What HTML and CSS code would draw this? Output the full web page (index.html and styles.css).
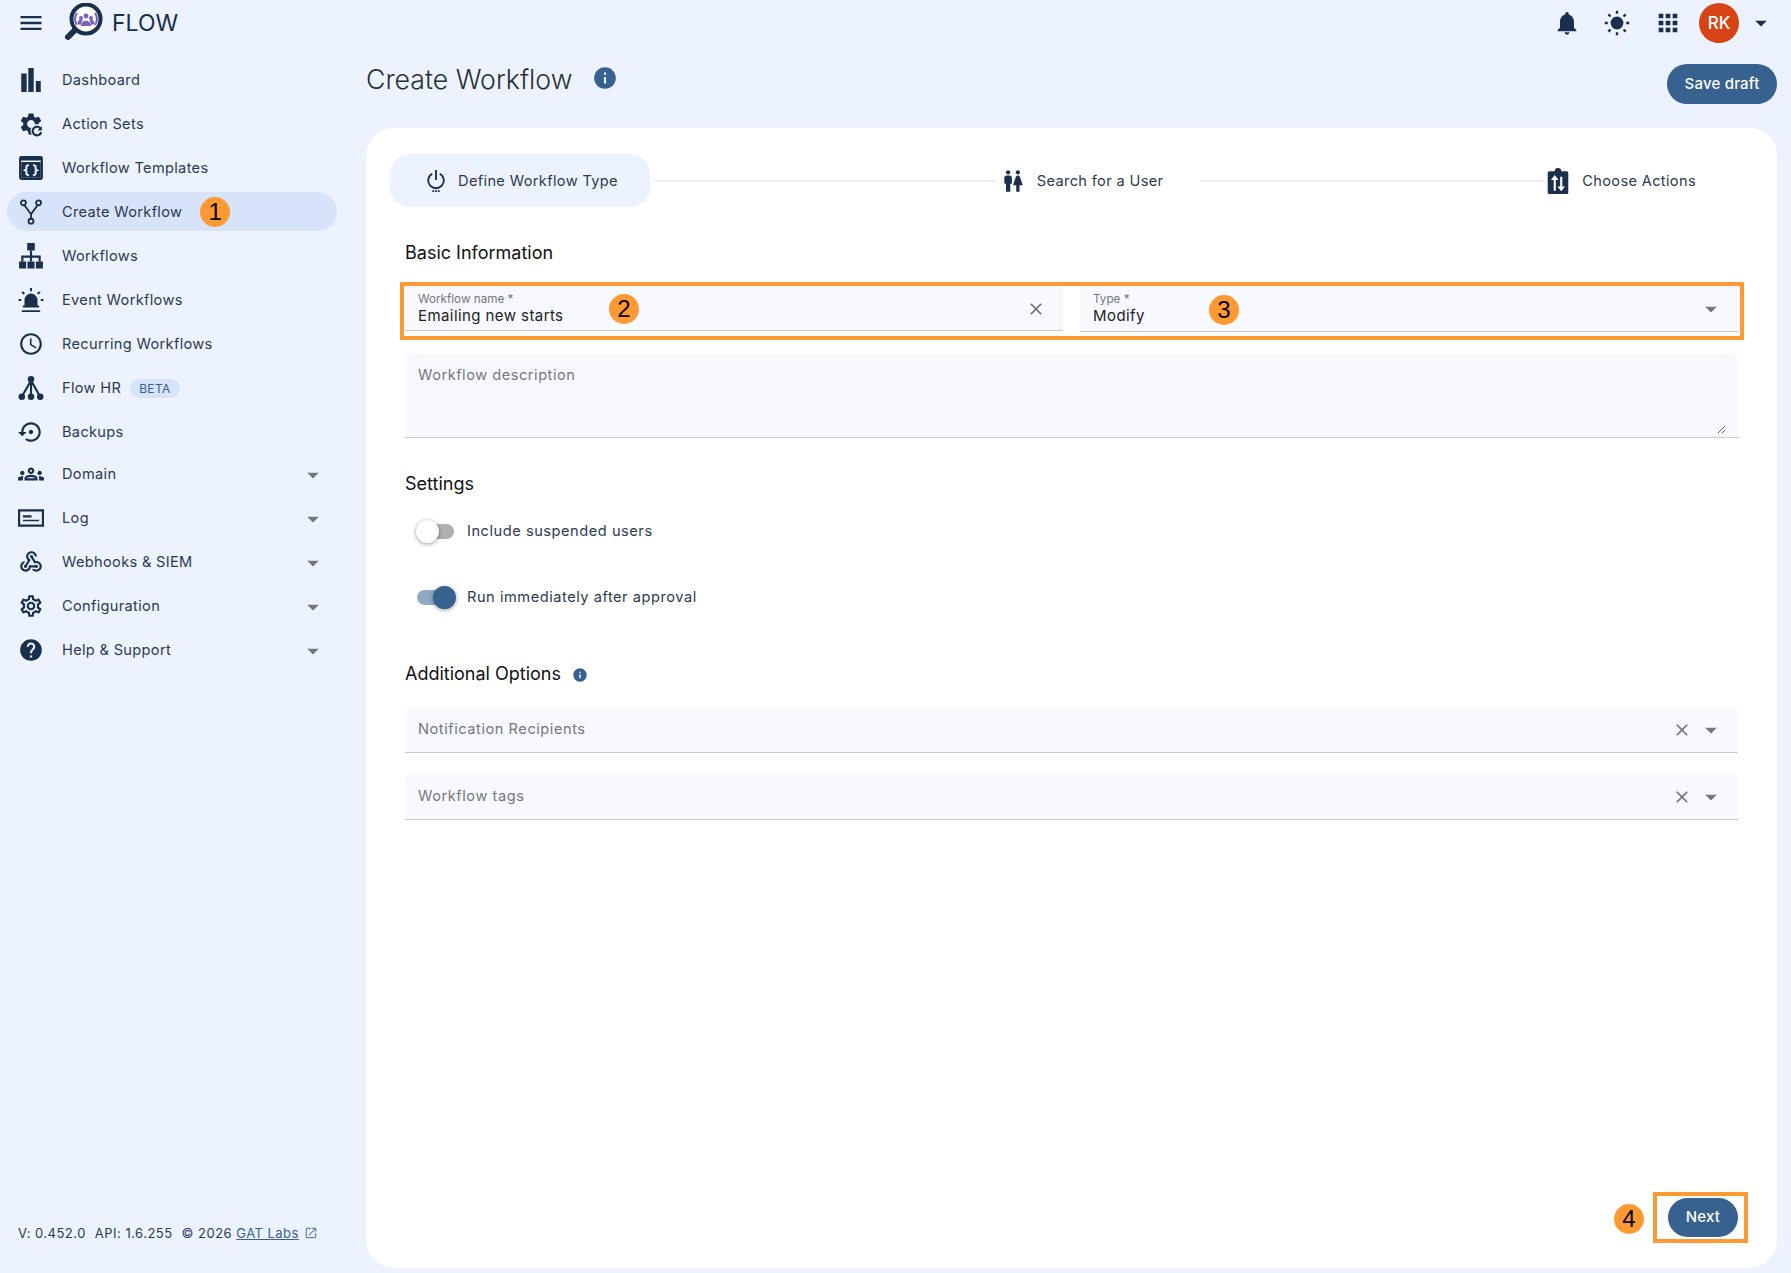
FILE: index.html
```html
<!DOCTYPE html>
<html lang="en">

<head>
  <meta charset="UTF-8">
  <title>Create Workflow</title>
  <link rel="stylesheet" href="styles.css">
</head>

<body>
  <header class="topbar">
    <svg class="menu-icon" viewBox="0 0 24 24"><path d="M3 18h18v-2H3v2zm0-5h18v-2H3v2zm0-7v2h18V6H3z"/></svg>
    <svg class="logo" viewBox="0 0 40 40">
      <path d="M14 25 5 34" stroke="#1a2f4b" stroke-width="6" stroke-linecap="round" fill="none"/>
      <circle cx="23" cy="16" r="14.5" fill="#fff" stroke="#1a2f4b" stroke-width="4"/>
      <path d="M14 10a11 11 0 0 0 0 12M32 10a11 11 0 0 1 0 12" stroke="#7562b8" stroke-width="2" fill="none"/>
      <circle cx="23" cy="13" r="2.4" fill="#7562b8"/><circle cx="18" cy="15" r="2" fill="#7562b8"/><circle cx="28" cy="15" r="2" fill="#7562b8"/>
      <path d="M18 23c0-7 10-7 10 0zM14.500 21c0-5 4-5 5-4l-2 5zM31.500 21c0-5-4-5-5-4l2 5z" fill="#7562b8"/>
    </svg>
    <span class="brand">FLOW</span>
    <div class="top-actions">
      <svg class="top-icon" viewBox="0 0 24 24"><path d="M12 22c1.100 0 2-.9 2-2h-4c0 1.100.89 2 2 2zm6-6v-5c0-3.070-1.640-5.640-4.500-6.320V4c0-.83-.67-1.500-1.500-1.500s-1.500.67-1.500 1.500v.68C7.630 5.360 6 7.920 6 11v5l-2 2v1h16v-1l-2-2z"/></svg>
      <svg class="top-icon" viewBox="0 0 24 24"><circle cx="12" cy="12" r="5.500"/><path d="M12 1.500v2.600M12 19.900v2.600M1.500 12h2.600M19.900 12h2.600M4.600 4.600l1.800 1.800M17.600 17.600l1.800 1.800M4.600 19.400l1.800-1.800M17.600 6.400l1.800-1.800" stroke="#1a2f4b" stroke-width="2" fill="none"/></svg>
      <svg class="top-icon" viewBox="0 0 24 24"><path d="M4 8h4V4H4v4zm6 12h4v-4h-4v4zm-6 0h4v-4H4v4zm0-6h4v-4H4v4zm6 0h4v-4h-4v4zm6-10v4h4V4h-4zm-6 4h4V4h-4v4zm6 6h4v-4h-4v4zm0 6h4v-4h-4v4z"/></svg>
      <div class="avatar">RK</div>
      <svg class="top-caret" viewBox="0 0 24 24"><path d="M7 10l5 5 5-5z"/></svg>
    </div>
  </header>

  <aside class="sidebar">
    <nav class="nav">
      <a class="nav-item">
        <svg class="nav-icon" viewBox="0 0 24 24"><path d="M3 7h5v17H3zM9.500 2h5v22h-5zM16.500 14H21v10h-4.500z" transform="translate(0 -1)"/></svg>
        <span>Dashboard</span>
      </a>
      <a class="nav-item">
        <svg class="nav-icon" viewBox="0 0 24 24"><path d="M19.140 12.940c.04-.3.06-.61.06-.94 0-.32-.02-.64-.07-.94l2.030-1.580c.18-.14.23-.41.12-.61l-1.920-3.320c-.12-.22-.37-.29-.59-.22l-2.390.96c-.5-.38-1.030-.7-1.620-.94l-.36-2.540c-.04-.24-.24-.41-.48-.41h-3.840c-.24 0-.43.17-.47.41l-.36 2.540c-.59.24-1.130.57-1.620.94l-2.390-.96c-.22-.08-.47 0-.59.22L2.740 8.870c-.12.21-.08.47.12.61l2.030 1.580c-.05.3-.09.63-.09.94s.02.64.07.94l-2.030 1.580c-.18.14-.23.41-.12.61l1.920 3.320c.12.22.37.29.59.22l2.390-.96c.5.38 1.030.7 1.620.94l.36 2.540c.05.24.24.41.48.41h3.840c.24 0 .44-.17.47-.41l.36-2.540c.59-.24 1.130-.56 1.620-.94l2.390.96c.22.08.47 0 .59-.22l1.920-3.320c.12-.22.07-.47-.12-.61l-2.010-1.580zM12 15.600c-1.980 0-3.600-1.620-3.600-3.600s1.620-3.600 3.600-3.600 3.600 1.620 3.600 3.600-1.620 3.600-3.600 3.600z"/><circle cx="17.500" cy="18" r="6" fill="#ecf3ff"/><path d="M21 16.500a4 4 0 1 0 .4 3" stroke="#1a2f4b" stroke-width="2" fill="none"/><path d="M22 14v4h-4z"/></svg>
        <span>Action Sets</span>
      </a>
      <a class="nav-item">
        <svg class="nav-icon" viewBox="0 0 24 24"><path fill-rule="evenodd" d="M3 1h18a2 2 0 0 1 2 2v18a2 2 0 0 1-2 2H3a2 2 0 0 1-2-2V3a2 2 0 0 1 2-2zm0 4v16h18V5z"/><rect x="3" y="6.500" width="18" height="14.500" fill="#1a2f4b"/><path d="M10 9 7.800 10.300V13L6.200 14l1.600 1V17.700L10 19M14 9l2.200 1.300V13l1.600 1-1.600 1v2.700L14 19" stroke="#ecf3ff" stroke-width="1.800" fill="none"/></svg>
        <span>Workflow Templates</span>
      </a>
      <a class="nav-item active">
        <svg class="nav-icon" viewBox="0 0 24 24" fill="none" stroke="#1a2f4b" stroke-width="1.700"><circle cx="5" cy="3.500" r="2.300" fill="none"/><circle cx="19" cy="3.500" r="2.300" fill="none"/><circle cx="12" cy="20.500" r="2.300" fill="none"/><path d="M6 5.700 12 14l6-8.300M12 14v4.200" fill="none"/></svg>
        <span>Create Workflow</span>
        <span class="badge badge-nav">1</span>
      </a>
      <a class="nav-item">
        <svg class="nav-icon" viewBox="0 0 24 24"><path d="M8.500 0h7v7h-7zM1 17h6.500v6.500H1zM8.750 17h6.500v6.500h-6.500zM16.500 17H23v6.500h-6.500z"/><path d="M12 7v10M4 17v-4.500h16V17" stroke="#1a2f4b" stroke-width="2" fill="none"/></svg>
        <span>Workflows</span>
      </a>
      <a class="nav-item">
        <svg class="nav-icon" viewBox="0 0 24 24"><path d="M6 17v-5a6 6 0 0 1 12 0v5h1.500v2h-15v-2zM3.500 21.500h17v1.500h-17z"/><path d="M12 1v3M3.800 4.500l2 2M20.200 4.500l-2 2M.5 12h2.500M21 12h2.500" stroke="#1a2f4b" stroke-width="1.800" fill="none"/></svg>
        <span>Event Workflows</span>
      </a>
      <a class="nav-item">
        <svg class="nav-icon" viewBox="0 0 24 24"><path d="M11.990 2C6.470 2 2 6.480 2 12s4.470 10 9.990 10C17.520 22 22 17.520 22 12S17.520 2 11.990 2zM12 20c-4.420 0-8-3.580-8-8s3.580-8 8-8 8 3.580 8 8-3.580 8-8 8zm.5-13H11v6l5.250 3.150.75-1.230-4.500-2.670z"/></svg>
        <span>Recurring Workflows</span>
      </a>
      <a class="nav-item">
        <svg class="nav-icon" viewBox="0 0 24 24"><path d="M12 5 3.500 20M12 5v15M12 5l8.500 15" stroke="#1a2f4b" stroke-width="2" fill="none"/><circle cx="12" cy="4" r="3"/><circle cx="12" cy="20" r="3"/><circle cx="3.500" cy="20" r="3"/><circle cx="20.500" cy="20" r="3"/></svg>
        <span>Flow HR</span>
        <span class="beta">BETA</span>
      </a>
      <a class="nav-item">
        <svg class="nav-icon" viewBox="0 0 24 24"><path d="M14 12c0-1.100-.9-2-2-2s-2 .9-2 2 .9 2 2 2 2-.9 2-2zm-2-9c-4.970 0-9 4.030-9 9H0l4 4 4-4H5c0-3.870 3.130-7 7-7s7 3.130 7 7-3.130 7-7 7c-1.510 0-2.910-.49-4.060-1.300l-1.420 1.440C8.040 20.300 9.940 21 12 21c4.970 0 9-4.030 9-9s-4.030-9-9-9z"/></svg>
        <span>Backups</span>
      </a>
      <a class="nav-item first-group">
        <svg class="nav-icon" viewBox="0 0 24 24"><path d="M4 13c1.100 0 2-.9 2-2s-.9-2-2-2-2 .9-2 2 .9 2 2 2zm1.130 1.100c-.37-.06-.74-.1-1.130-.1-.99 0-1.930.21-2.780.58C.48 14.900 0 15.620 0 16.430V18h4.500v-1.610c0-.83.23-1.610.63-2.290zM20 13c1.100 0 2-.9 2-2s-.9-2-2-2-2 .9-2 2 .9 2 2 2zm4 3.430c0-.81-.48-1.530-1.220-1.850-.85-.37-1.790-.58-2.780-.58-.39 0-.76.04-1.130.1.4.68.63 1.460.63 2.290V18H24v-1.570zm-7.760-2.780c-1.170-.52-2.610-.9-4.240-.9-1.630 0-3.070.39-4.240.9C6.680 14.130 6 15.210 6 16.390V18h12v-1.610c0-1.180-.68-2.260-1.760-2.740zM8.070 16c.09-.23.13-.39.91-.69.97-.38 1.990-.56 3.020-.56s2.050.18 3.020.56c.77.3.81.46.91.69H8.070zM12 8c.55 0 1 .45 1 1s-.45 1-1 1-1-.45-1-1 .45-1 1-1m0-2c-1.660 0-3 1.340-3 3s1.340 3 3 3 3-1.340 3-3-1.340-3-3-3z"/></svg>
        <span>Domain</span>
        <svg class="nav-caret" viewBox="0 0 24 24"><path d="M7 10l5 5 5-5z"/></svg>
      </a>
      <a class="nav-item">
        <svg class="nav-icon" viewBox="0 0 24 24"><path fill-rule="evenodd" d="M0 4h24v16H0zm2 2v12h20V6z"/><path d="M4.500 9.500h8v2h-8zM4.500 13.500h15v1.500h-15z"/></svg>
        <span>Log</span>
        <svg class="nav-caret" viewBox="0 0 24 24"><path d="M7 10l5 5 5-5z"/></svg>
      </a>
      <a class="nav-item">
        <svg class="nav-icon" viewBox="0 0 24 24"><path d="M10 15h5.880c.27-.31.67-.5 1.120-.5.83 0 1.500.67 1.500 1.500s-.67 1.500-1.500 1.500c-.44 0-.84-.19-1.120-.5H11.900c-.46 2.280-2.480 4-4.900 4-2.760 0-5-2.240-5-5 0-2.420 1.720-4.440 4-4.900v2.070c-1.160.41-2 1.530-2 2.830 0 1.650 1.350 3 3 3s3-1.350 3-3v-1zm2.500-11c1.650 0 3 1.350 3 3h2c0-2.760-2.240-5-5-5s-5 2.240-5 5c0 1.430.6 2.710 1.550 3.620l-2.350 3.900C6.020 14.660 5.500 15.270 5.500 16c0 .83.67 1.500 1.500 1.500s1.500-.67 1.500-1.500c0-.16-.02-.31-.07-.45l3.380-5.630C10.490 9.610 9.500 8.420 9.500 7c0-1.650 1.350-3 3-3zm4.500 9c-.64 0-1.230.2-1.720.54l-3.050-5.070C11.530 8.350 11 7.740 11 7c0-.83.67-1.500 1.500-1.500S14 6.170 14 7c0 .15-.02.29-.06.43l2.190 3.650c.28-.05.57-.08.87-.08 2.760 0 5 2.240 5 5s-2.240 5-5 5c-1.850 0-3.470-1.010-4.330-2.500h2.670c.48.32 1.050.5 1.660.5 1.650 0 3-1.350 3-3s-1.350-3-3-3z"/></svg>
        <span>Webhooks &amp; SIEM</span>
        <svg class="nav-caret" viewBox="0 0 24 24"><path d="M7 10l5 5 5-5z"/></svg>
      </a>
      <a class="nav-item">
        <svg class="nav-icon" viewBox="0 0 24 24"><path d="M19.430 12.980c.04-.32.07-.64.07-.98 0-.34-.03-.66-.07-.98l2.110-1.650c.19-.15.24-.42.12-.64l-2-3.460c-.09-.16-.26-.25-.44-.25-.06 0-.12.01-.17.03l-2.490 1c-.52-.4-1.080-.73-1.690-.98l-.38-2.650C14.460 2.180 14.250 2 14 2h-4c-.25 0-.46.18-.49.42l-.38 2.650c-.61.25-1.170.59-1.690.98l-2.490-1c-.06-.02-.12-.03-.18-.03-.17 0-.34.09-.43.25l-2 3.460c-.13.22-.07.49.12.64l2.110 1.650c-.04.32-.07.65-.07.98 0 .33.03.66.07.98l-2.110 1.650c-.19.15-.24.42-.12.64l2 3.460c.09.16.26.25.44.25.06 0 .12-.01.17-.03l2.490-1c.52.4 1.080.73 1.690.98l.38 2.650c.03.24.24.42.49.42h4c.25 0 .46-.18.49-.42l.38-2.650c.61-.25 1.170-.59 1.690-.98l2.490 1c.06.02.12.03.18.03.17 0 .34-.09.43-.25l2-3.460c.12-.22.07-.49-.12-.64l-2.110-1.650zm-1.980-1.710c.04.31.05.52.05.73 0 .21-.02.43-.05.73l-.14 1.130.89.7 1.080.84-.7 1.210-1.270-.51-1.040-.42-.9.68c-.43.32-.84.56-1.250.73l-1.060.43-.16 1.130-.2 1.350h-1.400l-.19-1.350-.16-1.130-1.060-.43c-.43-.18-.83-.41-1.230-.71l-.91-.7-1.060.43-1.270.51-.7-1.210 1.080-.84.89-.7-.14-1.130c-.03-.31-.05-.54-.05-.74s.02-.43.05-.73l.14-1.130-.89-.7-1.080-.84.7-1.210 1.270.51 1.040.42.9-.68c.43-.32.84-.56 1.250-.73l1.060-.43.16-1.130.2-1.350h1.390l.19 1.350.16 1.130 1.060.43c.43.18.83.41 1.230.71l.91.7 1.060-.43 1.270-.51.7 1.210-1.070.85-.89.7.14 1.130zM12 8c-2.210 0-4 1.790-4 4s1.790 4 4 4 4-1.790 4-4-1.790-4-4-4zm0 6c-1.100 0-2-.9-2-2s.9-2 2-2 2 .9 2 2-.9 2-2 2z"/></svg>
        <span>Configuration</span>
        <svg class="nav-caret" viewBox="0 0 24 24"><path d="M7 10l5 5 5-5z"/></svg>
      </a>
      <a class="nav-item">
        <svg class="nav-icon" viewBox="0 0 24 24"><path d="M12 2C6.480 2 2 6.480 2 12s4.480 10 10 10 10-4.480 10-10S17.520 2 12 2zm1 17h-2v-2h2v2zm2.070-7.750l-.9.92C13.450 12.900 13 13.500 13 15h-2v-.5c0-1.100.45-2.100 1.170-2.830l1.240-1.260c.37-.36.59-.86.59-1.410 0-1.100-.9-2-2-2s-2 .9-2 2H8c0-2.210 1.790-4 4-4s4 1.790 4 4c0 .88-.36 1.680-.93 2.250z"/></svg>
        <span>Help &amp; Support</span>
        <svg class="nav-caret" viewBox="0 0 24 24"><path d="M7 10l5 5 5-5z"/></svg>
      </a>
    </nav>
    <div class="version">
      <span>V: 0.452.0</span>
      <span>API: 1.6.255</span>
      <span>© 2026 <a class="gat-link">GAT Labs</a></span>
      <svg class="ext-icon" viewBox="0 0 24 24"><path d="M19 19H5V5h7V3H5c-1.110 0-2 .9-2 2v14c0 1.100.89 2 2 2h14c1.100 0 2-.9 2-2v-7h-2v7zM14 3v2h3.590l-9.830 9.830 1.410 1.410L19 6.410V10h2V3h-7z"/></svg>
    </div>
  </aside>

  <main class="main">
    <div class="page-head">
      <h1 class="page-title">Create Workflow</h1>
      <svg class="info-big" viewBox="0 0 24 24"><path d="M12 2C6.480 2 2 6.480 2 12s4.480 10 10 10 10-4.480 10-10S17.520 2 12 2zm1 15h-2v-6h2v6zm0-8h-2V7h2v2z"/></svg>
      <button class="btn save-btn">Save draft</button>
    </div>

    <section class="panel">
      <div class="stepper">
        <div class="step step-active">
          <svg class="step-icon" viewBox="0 0 24 24"><path d="M11 0h2v11h-2zM16.800 3.200l-1.200 1.600A7.500 7.500 0 1 1 8.400 4.800L7.200 3.200a9.500 9.500 0 1 0 9.600 0zM8 22h2v2H8zM11 22h2v2h-2zM14 22h2v2h-2z"/></svg>
          <span>Define Workflow Type</span>
        </div>
        <div class="step-line"></div>
        <div class="step step-mid">
          <svg class="step-icon" viewBox="0 0 24 24"><path d="M5.500 22v-7.500H4V9c0-1.100.9-2 2-2h3c1.100 0 2 .9 2 2v5.500H9.500V22h-4zM18 22v-6h3l-2.540-7.630C18.180 7.550 17.420 7 16.560 7h-.12c-.86 0-1.630.55-1.900 1.370L12 16h3v6h3zM7.500 6c1.110 0 2-.89 2-2s-.89-2-2-2-2 .89-2 2 .89 2 2 2zm9 0c1.110 0 2-.89 2-2s-.89-2-2-2-2 .89-2 2 .89 2 2 2z"/></svg>
          <span>Search for a User</span>
        </div>
        <div class="step-line"></div>
        <div class="step step-last">
          <svg class="step-icon" viewBox="0 0 24 24"><path d="M4 3h5a3 3 0 0 1 6 0h5a1.500 1.500 0 0 1 1.500 1.500v18A1.500 1.500 0 0 1 20 24H4a1.500 1.500 0 0 1-1.500-1.500v-18A1.500 1.500 0 0 1 4 3z"/><path d="M9 21V10M15 8v11" stroke="#fff" stroke-width="2" fill="none"/><path d="M5.500 11 9 6.500l3.500 4.500zM11.500 17 15 21.500l3.500-4.500z" fill="#fff"/></svg>
          <span>Choose Actions</span>
        </div>
      </div>

      <h2 class="section-title section-basic">Basic Information</h2>
      <div class="mark-row">
        <div class="field field-name">
          <span class="field-label">Workflow name *</span>
          <span class="field-value">Emailing new starts</span>
          <span class="badge badge-name">2</span>
          <svg class="clear-icon" viewBox="0 0 24 24"><path d="M19 6.410 17.590 5 12 10.590 6.410 5 5 6.410 10.590 12 5 17.590 6.410 19 12 13.410 17.590 19 19 17.590 13.410 12z"/></svg>
        </div>
        <div class="field field-type">
          <span class="field-label">Type *</span>
          <span class="field-value">Modify</span>
          <span class="badge badge-type">3</span>
          <svg class="drop-icon" viewBox="0 0 24 24"><path d="M7 10l5 5 5-5z"/></svg>
        </div>
      </div>
      <div class="description-box">
        <textarea class="description" placeholder="Workflow description"></textarea>
      </div>

      <h2 class="section-title section-settings">Settings</h2>
      <div class="toggle-row toggle-row-first">
        <span class="toggle"><span class="thumb"></span></span>
        <span>Include suspended users</span>
      </div>
      <div class="toggle-row">
        <span class="toggle toggle-on"><span class="thumb"></span></span>
        <span>Run immediately after approval</span>
      </div>

      <h2 class="section-title section-options">
        Additional Options
        <svg class="info-small" viewBox="0 0 24 24"><path d="M12 2C6.480 2 2 6.480 2 12s4.480 10 10 10 10-4.480 10-10S17.520 2 12 2zm1 15h-2v-6h2v6zm0-8h-2V7h2v2z"/></svg>
      </h2>
      <div class="select-field">
        <span>Notification Recipients</span>
        <svg class="clear-icon" viewBox="0 0 24 24"><path d="M19 6.410 17.590 5 12 10.590 6.410 5 5 6.410 10.590 12 5 17.590 6.410 19 12 13.410 17.590 19 19 17.590 13.410 12z"/></svg>
        <svg class="drop-icon" viewBox="0 0 24 24"><path d="M7 10l5 5 5-5z"/></svg>
      </div>
      <div class="select-field">
        <span>Workflow tags</span>
        <svg class="clear-icon" viewBox="0 0 24 24"><path d="M19 6.410 17.590 5 12 10.590 6.410 5 5 6.410 10.590 12 5 17.590 6.410 19 12 13.410 17.590 19 19 17.590 13.410 12z"/></svg>
        <svg class="drop-icon" viewBox="0 0 24 24"><path d="M7 10l5 5 5-5z"/></svg>
      </div>

      <div class="panel-foot">
        <span class="badge badge-next">4</span>
        <div class="mark-next">
          <button class="btn next-btn">Next</button>
        </div>
      </div>
    </section>
  </main>
</body>

</html>
```

FILE: styles.css
```css
* {
  margin: 0;
  padding: 0;
  box-sizing: border-box;
  font-family: Inter, "Noto Sans", sans-serif;
}

html,
body {
  height: 100%;
  overflow: hidden;
}

body {
  display: grid;
  grid-template-columns: 366px 1fr;
  grid-template-rows: 46px 1fr;
  background: #ecf3ff;
  color: #2c3a50;
}

svg {
  fill: #1a2f4b;
  flex-shrink: 0;
}

/* top bar */
.topbar {
  grid-column: 1 / 3;
  display: flex;
  align-items: center;
  padding: 0 16px 0 17px;
}

.menu-icon {
  width: 28px;
  height: 28px;
}

.logo {
  width: 40px;
  height: 40px;
  margin-left: 18px;
}

.brand {
  margin-left: 9px;
  font-size: 23px;
  color: #1a2f4b;
}

.top-actions {
  margin-left: auto;
  display: flex;
  align-items: center;
}

.top-icon {
  width: 28px;
  height: 28px;
  margin-right: 22.5px;
}

.avatar {
  width: 40px;
  height: 40px;
  margin-left: -5px;
  border-radius: 50%;
  background: #d84315;
  color: white;
  font-size: 17px;
  font-weight: 500;
  display: flex;
  align-items: center;
  justify-content: center;
}

.top-caret {
  width: 28px;
  height: 28px;
  margin-left: 8px;
}

/* sidebar */
.sidebar {
  display: flex;
  flex-direction: column;
  padding: 12px 0 32px 7px;
}

.nav {
  width: 330px;
}

.nav-item {
  height: 44px;
  display: flex;
  align-items: center;
  font-size: 14.6px;
  letter-spacing: 0.32px;
  border-radius: 20px;
  padding-left: 11px;
}

.nav-item.active {
  height: 39px;
  margin: 2px 0 3px;
  background: #d7e3f8;
}

.first-group {
  margin-top: -2px;
}

.nav-icon {
  width: 26px;
  height: 26px;
  margin-right: 18px;
}

.nav-caret {
  width: 28px;
  height: 28px;
  margin: 2px 10px 0 auto;
  fill: #747678;
}

.beta {
  margin-left: 9px;
  padding: 0 9px;
  height: 19px;
  line-height: 19px;
  border-radius: 10px;
  background: #d7e3f8;
  color: #37618e;
  font-size: 12px;
}

.badge {
  width: 30px;
  height: 30px;
  border-radius: 50%;
  background: #ff9933;
  color: black;
  font-family: "Liberation Sans", sans-serif;
  font-size: 24px;
  display: flex;
  align-items: center;
  justify-content: center;
  flex-shrink: 0;
}

.badge-nav {
  margin-left: 18px;
}

.badge-next {
  margin-top: 3px;
}

.version {
  margin-top: auto;
  padding-left: 11px;
  display: flex;
  align-items: center;
  gap: 9px;
  font-size: 13px;
  letter-spacing: 0.48px;
}

.gat-link {
  color: #37618e;
  text-decoration: underline;
}

.ext-icon {
  width: 14px;
  height: 14px;
  margin-left: -4px;
  fill: #5f83ab;
}

/* main */
.main {
  display: flex;
  flex-direction: column;
  padding: 0 14px 5px 0;
  min-height: 0;
}

.page-head {
  height: 82px;
  flex-shrink: 0;
  display: flex;
  align-items: flex-start;
}

.page-title {
  margin-top: 16px;
  font-size: 26.7px;
  font-weight: 300;
  line-height: 34px;
  color: #2a2f36;
}

.info-big {
  width: 26px;
  height: 26px;
  margin: 19px 0 0 20px;
  fill: #37618e;
}

.btn {
  border: none;
  border-radius: 20px;
  background: #37618e;
  color: white;
  font-size: 15px;
  font-weight: 500;
  letter-spacing: 0.2px;
  padding-bottom: 2px;
}

.save-btn {
  margin: 18px 0 0 auto;
  width: 110px;
  height: 40px;
}

.panel {
  flex: 1;
  background: white;
  border-radius: 28px;
  padding: 26px 39px 25px;
  display: flex;
  flex-direction: column;
  min-height: 0;
}

/* stepper */
.stepper {
  display: flex;
  align-items: center;
  margin-left: -15px;
  height: 53px;
  flex-shrink: 0;
  font-size: 14.6px;
  letter-spacing: 0.35px;
}

.step {
  display: flex;
  align-items: center;
  white-space: nowrap;
  height: 100%;
}

.step-active {
  width: 260px;
  margin-right: 5px;
  padding-left: 35px;
  background: #ecf3ff;
  border-radius: 20px;
}

.step-mid {
  padding: 0 38px 0 3px;
}

.step-last {
  padding: 0 42px 0 2px;
}

.step-icon {
  width: 26px;
  height: 26px;
  margin-right: 11px;
}

.step-active .step-icon {
  width: 22px;
  height: 24px;
}

.step-line {
  flex: 1;
  height: 2px;
  background: #eeeeee;
}

/* form */
.section-title {
  font-size: 18px;
  font-weight: 400;
  line-height: 24px;
  color: #111;
  flex-shrink: 0;
}

.section-basic {
  margin-top: 34px;
}

.section-settings {
  margin-top: 34px;
}

.section-options {
  margin-top: 46px;
  display: flex;
  align-items: center;
}

.info-small {
  width: 16px;
  height: 16px;
  margin: 2px 0 0 11px;
  fill: #37618e;
}

.mark-row {
  margin: 17px -6px 0 -5px;
  height: 58px;
  flex-shrink: 0;
  border: 4px solid #ff9933;
  display: flex;
  justify-content: space-between;
  padding: 0 2px 0 1px;
}

.field {
  position: relative;
  width: 658px;
  height: 45px;
  padding-left: 13px;
  background: #f7f9ff;
  border-bottom: 1px solid #c9c9cc;
  border-radius: 4px 4px 0 0;
  display: flex;
  flex-direction: column;
}

.field-type {
  height: 46px;
}

.field-label {
  margin-top: 6px;
  font-size: 11.7px;
  line-height: 14px;
  color: #74777c;
}

.field-value {
  font-size: 15px;
  line-height: 19px;
  letter-spacing: 0.42px;
  color: #222;
}

.badge-name,
.badge-type {
  position: absolute;
  top: 8px;
}

.badge-name {
  left: 204px;
}

.badge-type {
  top: 9px;
  left: 129px;
}

.clear-icon {
  width: 20px;
  height: 20px;
  fill: #747678;
}

.drop-icon {
  width: 28px;
  height: 28px;
  fill: #747678;
}

.field .clear-icon {
  position: absolute;
  right: 17px;
  top: 13px;
}

.field .drop-icon {
  position: absolute;
  right: 13px;
  top: 9px;
}

.description-box {
  margin-top: 14px;
  height: 84px;
  flex-shrink: 0;
  padding: 0 12px 3px 0;
  background: #f7f9ff;
  border-bottom: 1px solid #c9c9cc;
  border-radius: 4px 4px 0 0;
}

.description {
  display: block;
  width: 100%;
  height: 100%;
  padding: 12px 13px;
  background: transparent;
  border: none;
  font-size: 14.6px;
  letter-spacing: 0.52px;
  outline: none;
}

.description::placeholder {
  color: #74777c;
}

.toggle-row {
  height: 38px;
  flex-shrink: 0;
  margin-top: 28px;
  padding-left: 12px;
  display: flex;
  align-items: center;
  gap: 13px;
  font-size: 14.6px;
  letter-spacing: 0.54px;
}

.toggle-row-first {
  margin-top: 16px;
}

.toggle {
  position: relative;
  width: 37px;
  height: 15px;
  border-radius: 8px;
  background: #b0b0b0;
}

.toggle .thumb {
  position: absolute;
  left: -1px;
  top: -4px;
  width: 23px;
  height: 23px;
  border-radius: 50%;
  background: white;
  box-shadow: 0 1px 4px rgba(0, 0, 0, 0.4);
}

.toggle-on {
  background: #90aac6;
}

.toggle-on .thumb {
  left: auto;
  right: -2px;
  background: #37618e;
}

.select-field {
  margin-top: 22px;
  height: 45px;
  flex-shrink: 0;
  padding: 0 13px 2px;
  background: #f7f9ff;
  border-bottom: 1px solid #c9c9cc;
  border-radius: 4px 4px 0 0;
  display: flex;
  align-items: center;
  font-size: 14.6px;
  letter-spacing: 0.55px;
  color: #74777c;
}

.select-field .clear-icon {
  margin: 2px 5px 0 auto;
}

.select-field .drop-icon {
  margin-top: 2px;
}

.panel-foot {
  margin-top: auto;
  align-self: flex-end;
  margin-right: -10px;
  display: flex;
  align-items: center;
  gap: 9px;
}

.mark-next {
  border: 4px solid #ff9933;
  padding: 2px 6px 2px 11px;
}

.next-btn {
  display: block;
  width: 70px;
  height: 39px;
}
```
